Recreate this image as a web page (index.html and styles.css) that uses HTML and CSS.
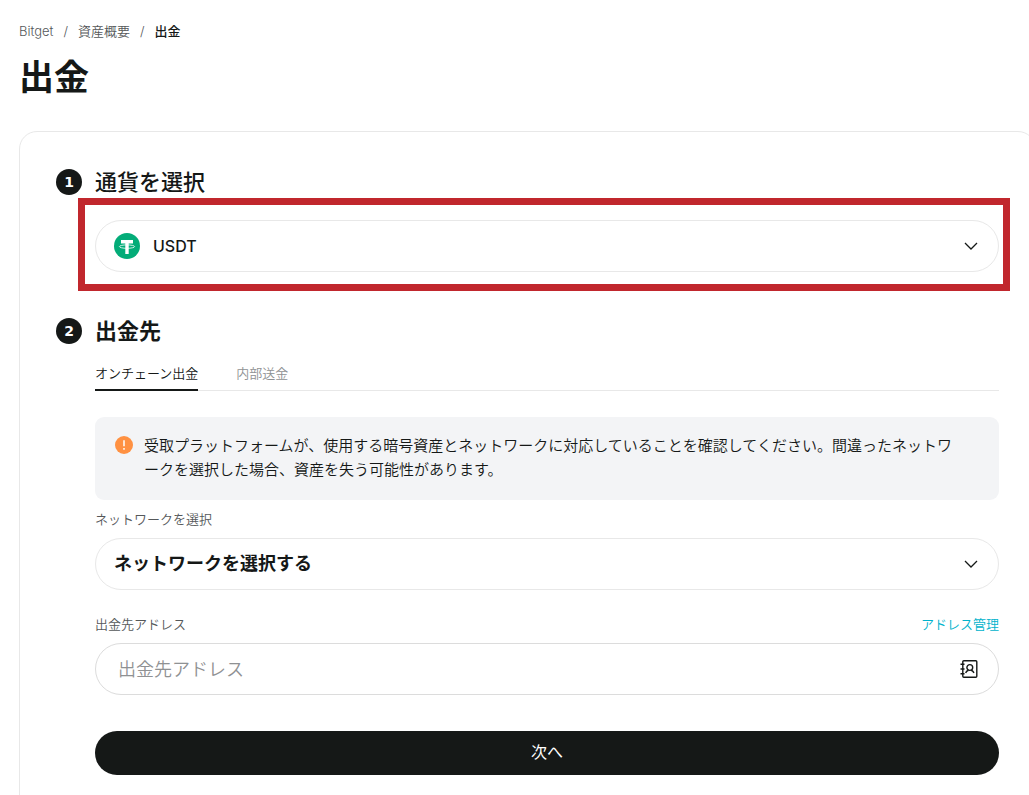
FILE: index.html
```html
<!DOCTYPE html>
<html lang="ja">
<head>
<meta charset="utf-8">
<meta name="viewport" content="width=device-width, initial-scale=1">
<title>出金 | Bitget</title>
<link rel="stylesheet" href="styles.css">
</head>
<body>
<header class="page-header">
  <nav class="breadcrumb" aria-label="パンくず">
    <a href="#">Bitget</a><span>/</span><a href="#">資産概要</a><span>/</span><a class="current" href="#" aria-current="page">出金</a>
  </nav>
  <h1 class="title">出金</h1>
</header>
<main class="card">
  <section class="step">
    <span class="number">1</span>
    <h2 class="heading"><label for="coin">通貨を選択</label></h2>
    <div class="content coin-content">
      <div class="field">
        <svg class="coin-icon" viewBox="0 0 26 26" aria-hidden="true">
          <circle cx="13" cy="13" r="13" fill="#03ac78"/>
          <path fill="#fff" d="M7 7h12v3.400h-4.300V21h-3.400V10.400H7z"/>
          <ellipse cx="13" cy="13.600" rx="7.600" ry="1.700" fill="none" stroke="#fff" stroke-width=".8"/>
        </svg>
        <select class="select coin" id="coin"><option>USDT</option></select>
        <svg class="chevron" viewBox="0 0 14 8" aria-hidden="true"><path d="M1 1l6 6 6-6"/></svg>
      </div>
      <div class="highlight"></div>
    </div>
  </section>
  <section class="step">
    <span class="number">2</span>
    <h2 class="heading">出金先</h2>
    <div class="content">
      <div class="tabs" role="tablist">
        <button class="tab active" type="button" role="tab" aria-selected="true">オンチェーン出金</button>
        <button class="tab" type="button" role="tab" aria-selected="false">内部送金</button>
      </div>
      <div class="notice">
        <svg class="notice-icon" viewBox="0 0 18 18" aria-hidden="true">
          <circle cx="9" cy="9" r="9" fill="#ff9142"/>
          <path d="M9 4.300v6M9 12v1.700" stroke="#fff" stroke-width="1.500"/>
        </svg>
        <p class="notice-text">受取プラットフォームが、使用する暗号資産とネットワークに対応していることを確認してください。間違ったネットワークを選択した場合、資産を失う可能性があります。</p>
      </div>
      <form class="form">
        <div class="group">
          <label class="label" for="network">ネットワークを選択</label>
          <div class="field">
            <select class="select" id="network"><option>ネットワークを選択する</option></select>
            <svg class="chevron" viewBox="0 0 14 8" aria-hidden="true"><path d="M1 1l6 6 6-6"/></svg>
          </div>
        </div>
        <div class="group">
          <div class="label-row">
            <label class="label" for="address">出金先アドレス</label>
            <a class="manage" href="#">アドレス管理</a>
          </div>
          <div class="field address-field">
            <input class="input" id="address" type="text" placeholder="出金先アドレス">
            <button class="book" type="button" aria-label="アドレス帳">
              <svg class="book-icon" viewBox="0 0 18 20" aria-hidden="true">
                <rect x="2.800" y="1.700" width="14" height="16.600" rx="1"/>
                <path d="M.5 5.200h4M.5 10h4M.5 14.800h4"/>
                <circle cx="9.800" cy="8.500" r="2.900"/>
                <path d="M5.600 13.800c.8-1.500 1.800-2.300 2.900-2.600M11.100 11.200c1.100.3 2.100 1.100 2.900 2.600"/>
              </svg>
            </button>
          </div>
        </div>
        <button class="submit" type="button">次へ</button>
      </form>
    </div>
  </section>
</main>
</body>
</html>
```
FILE: styles.css
```css
* {
  box-sizing: border-box;
}

body {
  margin: 0;
  padding: 20px 0 0 19px;
  overflow-x: hidden;
  background: #fff;
  color: #151817;
  font-family: Inter, "Noto Sans CJK JP", sans-serif;
  font-size: 13px;
  font-weight: 350;
  line-height: 22px;
}

button,
input,
select {
  margin: 0;
  padding: 0;
  border: 0;
  background: none;
  color: inherit;
  font: inherit;
}

a {
  color: inherit;
  text-decoration: none;
}

.breadcrumb {
  display: flex;
  gap: 10px;
  color: #55585a;
}

.breadcrumb .current {
  color: #151817;
  font-weight: 500;
}

.title {
  margin: 12px 0 0;
  font-size: 35px;
  font-weight: 700;
  line-height: 46px;
}

.card {
  display: flex;
  flex-direction: column;
  gap: 46px;
  margin: 31px -7px 0 0;
  padding: 37px 36px 60px;
  border: 1px solid #e8e8e8;
  border-radius: 18px;
}

.step {
  display: grid;
  grid-template-columns: 26px minmax(0, 1fr);
  column-gap: 13px;
}

.number {
  height: 26px;
  border-radius: 50%;
  background: #151817;
  color: #fff;
  font-family: "DejaVu Sans", sans-serif;
  font-size: 14px;
  font-weight: 700;
  line-height: 26px;
  text-align: center;
}

.heading {
  margin: 0;
  font-size: 22px;
  font-weight: 700;
  line-height: 26px;
}

.heading label {
  font-weight: 500;
}

.content {
  grid-column: 2;
}

.coin-content {
  position: relative;
  margin-top: 25px;
}

.highlight {
  position: absolute;
  inset: -22px -11px -19px -17px;
  border: 7px solid #c1272d;
  pointer-events: none;
}

.field {
  display: flex;
  align-items: center;
  height: 52px;
  padding: 0 20px 0 18px;
  border: 1px solid #e8e8e8;
  border-radius: 26px;
}

.coin-icon {
  width: 26px;
  height: 26px;
  margin-right: 13px;
}

.select {
  flex: 1;
  min-width: 0;
  height: 100%;
  appearance: none;
  font-size: 18px;
  font-weight: 700;
}

.coin {
  font-size: 16px;
  font-weight: 500;
}

.chevron {
  width: 14px;
  height: 8px;
  fill: none;
  stroke: #151817;
  stroke-width: 1.3;
  pointer-events: none;
}

.tabs {
  display: flex;
  gap: 38px;
  margin-top: 18px;
  border-bottom: 1px solid #e8e8e8;
}

.tab {
  margin-bottom: -1px;
  padding-bottom: 5px;
  border-bottom: 2px solid transparent;
  color: #8f9193;
}

.tab.active {
  border-color: #151817;
  color: #151817;
}

.notice {
  display: flex;
  gap: 11px;
  margin-top: 26px;
  padding: 17px 40px 18px 20px;
  border-radius: 9px;
  background: #f3f4f6;
}

.notice-icon {
  flex: none;
  width: 18px;
  height: 18px;
  margin-top: 2px;
}

.notice-text {
  margin: 0;
  font-size: 15px;
  line-height: 24px;
}

.form {
  display: flex;
  flex-direction: column;
}

.group {
  display: flex;
  flex-direction: column;
  gap: 8px;
  margin-top: 8px;
}

.group + .group {
  margin-top: 23px;
}

.label-row {
  display: flex;
  justify-content: space-between;
}

.label {
  color: #55585a;
}

.manage {
  color: #00b2cc;
}

.address-field {
  padding-left: 22px;
  border-color: #dcdcdc;
}

.input {
  flex: 1;
  min-width: 0;
  height: 100%;
  outline: 0;
  font-size: 18px;
}

.input::placeholder {
  color: #8f9193;
}

.book {
  display: flex;
}

.book-icon {
  width: 18px;
  height: 20px;
  fill: none;
  stroke: #151817;
  stroke-width: 1.4;
}

.submit {
  height: 44px;
  margin-top: 36px;
  padding-bottom: 2px;
  border-radius: 22px;
  background: #151817;
  color: #fff;
  font-size: 16px;
  font-weight: 400;
}
```
